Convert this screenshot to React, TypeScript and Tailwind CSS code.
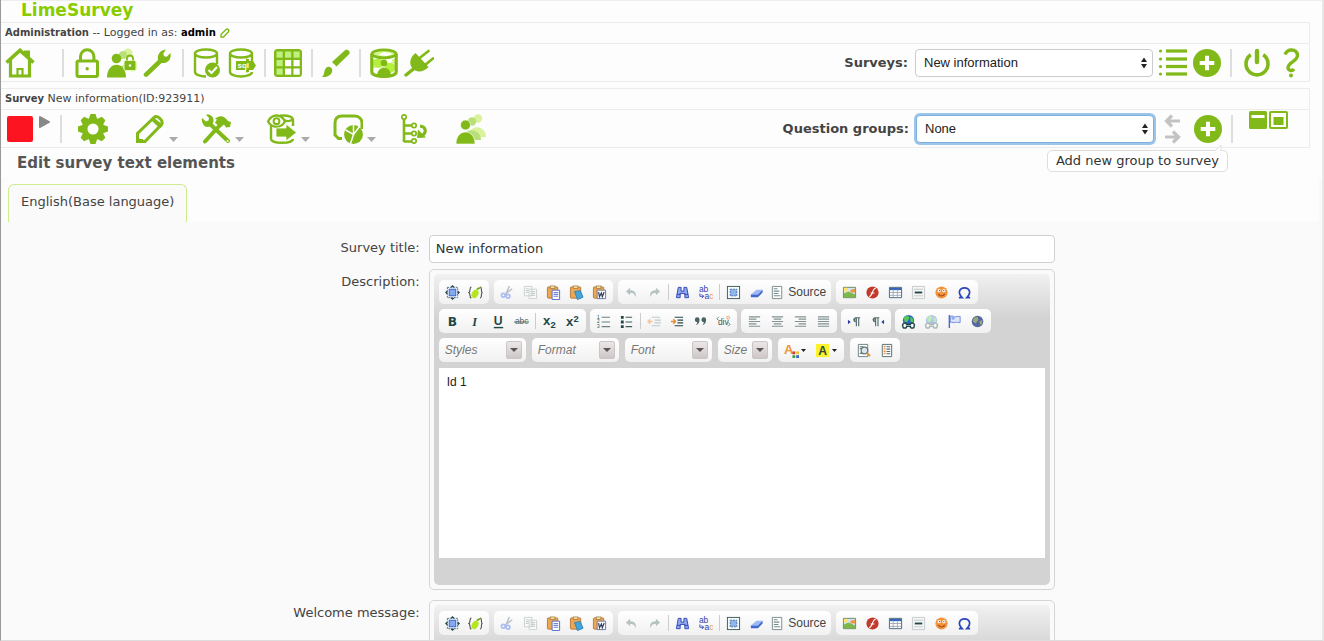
import React from 'react';

type Drawing = { children: React.ReactNode };

const G = '#80b918';
const LIGHT = '#b9e078';
const PALE = '#d9f29b';

/* ---------- icon frames ---------- */

function Big({ children }: Drawing) {
  return (
    <svg viewBox="0 0 30 30" className="block size-[30px]" fill="none" aria-hidden="true">
      {children}
    </svg>
  );
}

function Small({ children }: Drawing) {
  return (
    <svg viewBox="0 0 16 16" className="block size-[15px]" fill="none" aria-hidden="true">
      {children}
    </svg>
  );
}

/* ---------- administration icons ---------- */

const cylinder = (
  <path d="M3 5.500v18.500c0 2.600 5 4.500 11 4.500M25 16V5.500M3 5.500C3 3.300 8 1.500 14 1.500s11 1.800 11 4-5 4-11 4-11-1.800-11-4z" stroke={G} strokeWidth="2.400" />
);

const icons = {
  home: (
    <Big>
      <path d="M1.500 14.500L15 2.300l13.500 12.200" stroke={G} strokeWidth="3.600" />
      <path d="M19 2.500h6v8L19 5z" fill={G} />
      <path d="M5.500 12v16h19V12" stroke={G} strokeWidth="3.200" />
      <path d="M12.500 28.500v-7.500h5v7.500" stroke={G} strokeWidth="2.200" />
    </Big>
  ),
  lock: (
    <Big>
      <rect x="5" y="13" width="20.500" height="15.500" rx="1.500" stroke={G} strokeWidth="3" />
      <path d="M8.500 13V8.500a6.700 6.700 0 0 1 13.400 0V13" stroke={G} strokeWidth="3" />
      <circle cx="15.200" cy="20.800" r="1.700" fill={G} />
    </Big>
  ),
  usersLock: (
    <Big>
      <g fill={PALE}><circle cx="21" cy="5" r="4.500" /><circle cx="25" cy="18" r="5.500" /></g>
      <g fill={LIGHT}><circle cx="16" cy="7" r="4" /><path d="M11 23c0-7 12-8 16 0z" /></g>
      <circle cx="9.500" cy="10.500" r="4.800" fill={G} />
      <path d="M0 29.500c0-17 19-17 19 0z" fill={G} />
      <rect x="17" y="12.500" width="12" height="10" rx="1.500" fill={G} stroke="#e9f8c8" />
      <path d="M20 12.500v-2a3 3 0 0 1 6 0v2" stroke={G} strokeWidth="1.800" />
      <circle cx="23" cy="17.500" r="1.200" fill="#fff" />
    </Big>
  ),
  wrench: (
    <Big>
      <path d="M2 25.500L16 12c-.800-4.500 1-8.500 5.500-10l2.500-.500-2.800 4.200 1 2.600 2.600.500 3.600-3.800c1.300 6-2.500 10.800-8.800 10L5.400 28.500c-1.800 1.300-4.800-1-3.400-3z" fill={G} />
    </Big>
  ),
  dbCheck: (
    <Big>
      {cylinder}
      <circle cx="20.500" cy="22" r="7.500" fill={G} />
      <path d="M16.500 22l3 3 5.500-6" stroke="#fff" strokeWidth="2" />
    </Big>
  ),
  dbSql: (
    <Big>
      {cylinder}
      <path d="M14 28.500c6 0 11-2 11-4.500" stroke={G} strokeWidth="2.400" />
      <path d="M9 13h10v-2.500l3 .500v2h4l3 4.500-3 4.500h-4v2l-3 .500V22H9z" fill={G} />
      <text x="10.500" y="20" fontSize="8" fontWeight="bold" fill="#fff" fontFamily="Liberation Sans">sql</text>
    </Big>
  ),
  grid: (
    <Big>
      <rect x="1" y="1" width="28" height="28" rx="3.500" fill={G} />
      {[3.500, 12, 20.500].map((y, r) =>
        [3.500, 12, 20.500].map((x, c) => (
          <rect key={`${x}-${y}`} x={x} y={y} width="6.200" height="6.200" fill={r === 0 || c === 0 ? '#bdf07c' : '#fff'} />
        )),
      )}
    </Big>
  ),
  brush: (
    <Big>
      <path d="M11 14L24 2.200c2.500-1.600 5.700 1.300 4.300 3.800L15.500 18.500z" fill={G} />
      <path d="M1 29c3-2 1.500-7 4.500-9.500 2.500-2 7 .500 5.500 4.500-1.500 4-6 5.500-10 5z" fill={G} />
    </Big>
  ),
  dbUsers: (
    <Big>
      <path d="M3 6h24v20H3z" fill="#fff" />
      <path d="M4 11h22v9H4z" fill={PALE} />
      <circle cx="9" cy="15" r="4.500" fill="#b5f03c" /><circle cx="21" cy="20" r="5" fill="#b5f03c" />
      <circle cx="20" cy="12" r="3" fill="#fff" />
      <circle cx="15" cy="15" r="3.300" fill={G} />
      <path d="M8 28c0-11 14-11 14 0z" fill={G} />
      <path d="M2.800 5.500v18.500c0 2.600 5 4.500 12.200 4.500s12.200-2 12.200-4.500V5.500" stroke={G} strokeWidth="3.200" />
      <ellipse cx="15" cy="5.800" rx="12" ry="4" fill="#d3f58e" stroke={G} strokeWidth="2.800" />
      <path d="M9 7l6-3 6 1 2 1.500-6 1.500z" fill="#fff" />
    </Big>
  ),
  plug: (
    <Big>
      <path d="M2 27l8-6.500" stroke={G} strokeWidth="3.500" strokeLinecap="round" />
      <path d="M11.500 5L24.500 19c-4.500 5-11.500 6-15.500 2s-4-11 2.500-16z" fill={G} />
      <path d="M15 10.500l9.500-7.500M21 17l8-6.500" stroke={G} strokeWidth="2.600" strokeLinecap="round" />
    </Big>
  ),
  list: (
    <Big>
      {[3, 11, 18.500, 26].map((y) => (
        <g key={y} fill={G}><circle cx="2.500" cy={y} r="1.600" /><rect x="8" y={y - 1.600} width="21" height="3.200" /></g>
      ))}
    </Big>
  ),
  plus: (
    <Big>
      <circle cx="15" cy="15" r="14" fill={G} />
      <path d="M15 7.700v14.600M7.700 15h14.600" stroke="#fff" strokeWidth="4" />
    </Big>
  ),
  power: (
    <Big>
      <path d="M8.800 6.800a11 11 0 1 0 12.400 0" stroke={G} strokeWidth="3.600" />
      <path d="M15 3v11" stroke={G} strokeWidth="4.400" strokeLinecap="round" />
    </Big>
  ),
  help: (
    <Big>
      <path d="M9 6.500C10.500 2.800 13 2 15.500 2c3.700 0 6 2.300 6 5.500 0 5.500-9.500 7-9.500 12 0 2.800 4 4.200 6 1.500" stroke={G} strokeWidth="3.400" />
      <circle cx="15" cy="27.500" r="2" fill={G} />
    </Big>
  ),
  /* ---------- survey icons ---------- */
  gear: (
    <Big>
      {[0, 45, 90, 135].map((a) => (
        <path key={a} d="M12.500 0h5l1.700 5h-8.400zM10.800 25h8.400l-1.700 5h-5z" fill={G} transform={`rotate(${a} 15 15)`} />
      ))}
      <circle cx="15" cy="15" r="8.300" stroke={G} strokeWidth="5.500" />
    </Big>
  ),
  pencil: (
    <Big>
      <path d="M2.500 27.500v-8L19 3.500c3-3 10 3 7.500 7L10 27.500z" stroke={G} strokeWidth="3" />
      <path d="M18 3l10 8-3 3.500-8.500-8zM2 28v-6l3 3h3v3z" fill={G} />
    </Big>
  ),
  tools: (
    <Big>
      <path d="M9 10l18 17" stroke={G} strokeWidth="4" strokeLinecap="round" />
      <path d="M1 4l4 3.500 2.500-1L8 4 5 .800C10-.500 14 4 12 9c-2 5-8 4.500-9 2.500C1 9 .500 6 1 4z" fill={G} />
      <path d="M4 27.500L20 10" stroke={G} strokeWidth="4" strokeLinecap="round" />
      <path d="M14 5c4-4 9-4 13 2l3 1-1 5-4 .500-2-3-4 3-5-5 2-3z" fill={G} />
      <circle cx="26.500" cy="27" r="1" fill="#fff" />
    </Big>
  ),
  preview: (
    <Big>
      <path d="M4 12v13c0 5 22 5 22 0M13 1.800c8-1 13 1 13 4V12M17 6c4 2 7 1 9-1" stroke={G} strokeWidth="2.400" />
      <path d="M1 7.500C5-.500 14-.500 18 7.500c-4 7-13 7-17 0z" fill="#fff" stroke={G} strokeWidth="2.300" />
      <circle cx="9.500" cy="7.200" r="2.900" stroke={G} strokeWidth="2" />
      <path d="M9 14h10v-4l10.500 8.500L19 27v-4H9z" fill={G} stroke="#fff" strokeWidth=".8" />
    </Big>
  ),
  pie: (
    <Big>
      <path d="M9 24.500H5.500L2 21V9c0-5 3-7 7-7h12c5 0 8 3 8 7v6" stroke={G} strokeWidth="3" />
      <circle cx="20.500" cy="20.500" r="9.400" fill={G} />
      <path d="M20.500 11v9.500l-8-4.500M20.500 20.500l-3 9M20.500 20.500l6-8" stroke="#fff" strokeWidth="1.500" />
    </Big>
  ),
  tree: (
    <Big>
      <path d="M5 5v23M5 11.500h8M5 19.500h8M5 27.500h8" stroke={G} strokeWidth="2.600" />
      <g fill="#fff" stroke={G} strokeWidth="1.700"><circle cx="5" cy="3" r="2.200" /><circle cx="15" cy="11.500" r="2.200" /><circle cx="15" cy="19.500" r="2.200" /><circle cx="15" cy="27" r="2.200" /></g>
      <path d="M21 12c7 1 7 8 0 10.500" stroke={G} strokeWidth="3.200" /><path d="M18 24l1-8.500 8 8z" fill={G} />
    </Big>
  ),
  people: (
    <Big>
      <g fill={PALE}><circle cx="22" cy="4.500" r="4.200" /><path d="M13 23c0-14 17-12 17 0z" /></g>
      <g fill={LIGHT}><circle cx="16" cy="7.500" r="4.200" /><path d="M7 26c0-14 18-12 18 0z" /></g>
      <circle cx="9.500" cy="11" r="5" fill={G} stroke="#fff" strokeWidth=".6" />
      <path d="M0 30c0-16 19-16 19 0z" fill={G} stroke="#fff" strokeWidth=".6" />
    </Big>
  ),
  swap: (
    <Big>
      <path d="M21 7H8M13 1.500L7.500 7l5.500 5.500M6 23h13M14 17.500l5.500 5.500-5.500 5.500" stroke="#c3c3c3" strokeWidth="3.200" />
    </Big>
  ),
};

/* ---------- editor icons ---------- */

const INK = '#1f4747';
const paste = (
  <>
    <rect x="1.500" y="2" width="11" height="12" rx="1" fill="#eda652" stroke="#b97a3e" />
    <rect x="4.500" y="1" width="5" height="2.500" fill="#f4e2b0" stroke="#94702d" strokeWidth=".7" />
  </>
);
const textLines = (rows: number[][], color: string) => (
  <path d={rows.map(([x, y, w]) => `M${x} ${y}h${w}`).join('')} stroke={color} strokeWidth="1.200" />
);
const globe = (
  <>
    <circle cx="8" cy="7" r="6" fill="#2d63c8" />
    <path d="M3 4l4-3 2 3-2 4-3 1zM10 3l3 2v4l-3-1z" fill="#55cb54" />
    <path d="M2 13a2 2 0 0 1 4-2h4a2 2 0 0 1 4 2 2 2 0 0 1-4 0H6a2 2 0 0 1-4 0z" fill="#fff" stroke="#244848" strokeWidth="1.500" />
  </>
);

const small = {
  maximize: (
    <Small>
      <path d="M8 0L5.500 2.500h5zM8 16l-2.500-2.500h5zM0 8l2.500-2.500v5zM16 8l-2.500-2.500v5z" fill={INK} />
      <rect x="2.500" y="2.500" width="11" height="11" stroke="#506c80" strokeDasharray="2 1" />
      <rect x="4.500" y="4.500" width="7" height="7" fill="#83a9ef" stroke="#3462d0" />
    </Small>
  ),
  lime: (
    <Small>
      <path d="M3.500 2C1 3 3 7 1 8c2 1 0 5 2.500 6M13 2c2.500 1 .500 5 2 6-1.500 1 .500 5-2 6" stroke="#555" strokeWidth="1.200" />
      <ellipse cx="7.500" cy="9.500" rx="3.300" ry="4.800" fill="#b4e61c" transform="rotate(30 7.500 9.500)" />
      <path d="M9 5c0-2 2-3 5-3-1 2-2 3-5 3z" fill="#6eae16" />
    </Small>
  ),
  cut: (
    <Small>
      <path d="M10 1L6.500 9M13 4L5 10" stroke="#b8bec8" strokeWidth="1.500" />
      <g stroke="#a9bdf0" strokeWidth="1.800"><circle cx="3.500" cy="11" r="2" /><circle cx="8.500" cy="12" r="2" /></g>
    </Small>
  ),
  copy: (
    <Small>
      <path d="M1.500 1.500h8v10h-8zM6.500 4.500h8v10h-8z" fill="#fafafa" stroke="#c9d0d0" />
      {textLines([[3, 4, 3], [3, 6, 3], [3, 8, 3], [8, 7, 5], [8, 9, 5], [8, 11, 5]], '#c9d0d0')}
    </Small>
  ),
  paste: <Small>{paste}<path d="M6.500 5.500h8v10h-8z" fill="#fff" stroke="#5469c4" />{textLines([[8, 8, 5], [8, 10, 5], [8, 12, 5]], '#6f86d8')}</Small>,
  pasteText: <Small>{paste}<path d="M6 7l6-1 3 7-6 2.500z" fill="#45a5d8" stroke="#2d83bb" /></Small>,
  pasteWord: <Small>{paste}<path d="M5.500 5.500h9v9h-9z" fill="#fff" stroke="#6876a8" /><path d="M7 7.500l1 5 2-4 1 4 2-5" stroke="#333f60" strokeWidth="1.300" /></Small>,
  undo: <Small><path d="M6.500 3L2 7l4.500 4V8.500c4 0 5 1.500 5.500 4.500 2-5-1-7.500-5.500-7.500z" fill="#b7c3c3" /></Small>,
  redo: <Small><path d="M9.500 3L14 7l-4.500 4V8.500c-4 0-5 1.500-5.500 4.500-2-5 1-7.500 5.500-7.500z" fill="#b7c3c3" /></Small>,
  find: <Small><path d="M3.500 2.500h3v4h3v-4h3l2 11h-4V9h-5v4.500h-4z" fill="#8fa8ee" stroke="#3146b4" /><path d="M2 10h4M10 10h4" stroke="#3146b4" /></Small>,
  replace: (
    <Small>
      <text x="1" y="7" fontSize="9" fill="#2f44b5" fontFamily="Liberation Sans">ab</text>
      <text x="7" y="15" fontSize="9" fill="#2f44b5" fontFamily="Liberation Sans">a<tspan fill="#ea9442">c</tspan></text>
      <path d="M2 9v3h4M4 10l2 2-2 2" stroke="#2f44b5" />
    </Small>
  ),
  selectAll: <Small><rect x="1.500" y="1.500" width="13" height="13" stroke="#395c5c" /><rect x="4.500" y="4.500" width="7" height="7" fill="#8fb6e8" stroke="#3d70b0" strokeDasharray="2 1" /></Small>,
  erase: <Small><path d="M2 10l6-5h6.500l-5 5z" fill="#9dbaf7" /><path d="M2 10h7.500l5-5v3l-5 5H2z" fill="#4169cf" /></Small>,
  source: <Small><path d="M2.500 1.500h10v13h-10z" fill="#fff" stroke="#758a8a" />{textLines([[4, 4, 4], [4, 6.500, 6], [4, 9, 5], [4, 11.500, 7]], '#758a8a')}</Small>,
  image: <Small><path d="M1.500 2.500h13v11h-13z" fill="#cfe5fb" stroke="#6d8558" /><path d="M2 13V9l5-2 7 3v3z" fill="#7cb84a" /><path d="M9 5l5-1v4H9z" fill="#ef973a" /><path d="M2 3h4v4H2z" fill="#ffe36a" /></Small>,
  flash: <Small><circle cx="8" cy="8" r="6.500" fill="#c13a2b" /><path d="M11.500 3.500c-4 0-3 8-7 9M6 8.500h4" stroke="#fff" strokeWidth="1.200" /></Small>,
  table: <Small><path d="M1.500 2.500h13v11h-13z" fill="#fff" stroke="#4a5f7a" /><path d="M2 3h12v2.500H2z" fill="#3866b5" /><path d="M2 8h12M2 11h12M5.500 5v8M10 5v8" stroke="#9dabb9" /></Small>,
  rule: <Small><path d="M1.500 1.500h13v13h-13z" fill="#f5f5f5" stroke="#c4c9c9" /><path d="M4 8h8" stroke={INK} strokeWidth="2" /><path d="M3 4.500h10M3 11.500h10" stroke="#c4c9c9" /></Small>,
  smiley: <Small><circle cx="8" cy="8" r="6.500" fill="#f4943a" /><g fill="#fff"><circle cx="5.500" cy="6" r="1.700" /><circle cx="10.500" cy="6" r="1.700" /></g><path d="M4.500 9.500c2 3 5 3 7 0" stroke="#a04a1c" strokeWidth="1.200" /><path d="M5.500 6h1M10 6h1" stroke="#222" /></Small>,
  omega: <Small><path d="M2 13.500h3.500C0 8 3 3 8 3s8 5 2.500 10.500H14" stroke="#2c46b9" strokeWidth="1.800" /></Small>,
  bold: <Small><text x="3" y="12.500" fontSize="13" fontWeight="bold" fill={INK} fontFamily="DejaVu Sans">B</text></Small>,
  italic: <Small><text x="4.500" y="12.500" fontSize="13" fontWeight="bold" fontStyle="italic" fill={INK} fontFamily="Liberation Serif">I</text></Small>,
  underline: <Small><text x="3" y="11.500" fontSize="13" fontWeight="bold" fill={INK} fontFamily="Liberation Sans">U</text><path d="M3 14.500h10" stroke={INK} strokeWidth="1.500" /></Small>,
  strike: <Small><text x="1" y="11" fontSize="9" fill="#4e6a6a" fontFamily="Liberation Sans">abc</text><path d="M0 8.500h16" stroke="#4e6a6a" /></Small>,
  sub: <Small><text x="1" y="11.500" fontSize="14" fontWeight="bold" fill={INK} fontFamily="Liberation Sans">x</text><text x="9" y="15" fontSize="10" fontWeight="bold" fill={INK} fontFamily="Liberation Sans">2</text></Small>,
  sup: <Small><text x="1" y="13" fontSize="14" fontWeight="bold" fill={INK} fontFamily="Liberation Sans">x</text><text x="9" y="8" fontSize="10" fontWeight="bold" fill={INK} fontFamily="Liberation Sans">2</text></Small>,
  ol: <Small><g fontSize="5" fill={INK} fontFamily="Liberation Sans"><text x="1" y="5">1</text><text x="1" y="10">2</text><text x="1" y="15">3</text></g>{textLines([[6, 3.500, 9], [6, 8.500, 9], [6, 13.500, 9]], '#6b8282')}</Small>,
  ul: <Small><path d="M2 2h3v3H2zM2 7h3v3H2zM2 12h3v3H2z" fill={INK} />{textLines([[7, 3.500, 7], [7, 8.500, 7], [7, 13.500, 7]], '#3d5c5c')}</Small>,
  outdent: <Small><path d="M6 8H1M3.500 5.500L1 8l2.500 2.500" stroke="#f5c49b" strokeWidth="1.500" />{textLines([[5, 3.500, 9], [8, 6.500, 7], [8, 9.500, 7], [5, 12.500, 9]], '#bcc9c9')}</Small>,
  indent: <Small><path d="M1 8h5M3.500 5.500L6 8l-2.500 2.500" stroke="#e88b35" strokeWidth="1.500" />{textLines([[5, 3.500, 9], [8, 6.500, 6], [8, 9.500, 6], [5, 12.500, 9]], '#254848')}</Small>,
  quote: <Small><path d="M2 6a2.500 2.500 0 1 1 5 0c0 3-1.500 5-4 6 1-1 1.500-2 1.500-3.500C3 8.500 2 7.500 2 6zM9 6a2.500 2.500 0 1 1 5 0c0 3-1.500 5-4 6 1-1 1.500-2 1.500-3.500C10 8.500 9 7.500 9 6z" fill="#496363" /></Small>,
  div: <Small><text x="2" y="12" fontSize="9" fill="#385656" fontFamily="Liberation Sans">div</text><path d="M3 3L1 5l2 2M13 9l2 2-2 2" stroke="#607979" /><circle cx="13" cy="4" r="1.500" stroke="#ed9c56" /></Small>,
  left: <Small>{textLines([[2, 3, 12], [2, 5.500, 8], [2, 8, 12], [2, 10.500, 8], [2, 13, 12]], '#829191')}</Small>,
  center: <Small>{textLines([[2, 3, 12], [4, 5.500, 8], [2, 8, 12], [4, 10.500, 8], [2, 13, 12]], '#829191')}</Small>,
  right: <Small>{textLines([[2, 3, 12], [6, 5.500, 8], [2, 8, 12], [6, 10.500, 8], [2, 13, 12]], '#829191')}</Small>,
  justify: <Small>{textLines([[2, 3, 12], [2, 5.500, 12], [2, 8, 12], [2, 10.500, 12], [2, 13, 12]], '#829191')}</Small>,
  ltr: <Small><path d="M1 6l3 2.500L1 11z" fill="#2c3fa9" /><path d="M9 8.500A2.500 2.500 0 0 1 9 4h5M10 4v9M12.500 4v9" stroke="#536c6c" strokeWidth="1.200" /><path d="M9 4a2.200 2.200 0 0 0 0 4.500z" fill="#536c6c" /></Small>,
  rtl: <Small><path d="M15 6l-3 2.500 3 2.500z" fill="#2c3fa9" /><path d="M5 8.500A2.500 2.500 0 0 1 5 4h5M6 4v9M8.500 4v9" stroke="#536c6c" strokeWidth="1.200" /><path d="M5 4a2.200 2.200 0 0 0 0 4.500z" fill="#536c6c" /></Small>,
  link: <Small>{globe}</Small>,
  unlink: <Small><g opacity=".35">{globe}</g></Small>,
  anchor: <Small><path d="M2.500 1v14" stroke="#4a68cc" strokeWidth="1.500" /><path d="M3.500 2.500c3-1.500 4 1.500 6 .500s3 0 4.500-.500v6.500c-2 1-3-1-5 0s-3-1-5.500 0z" fill="#dce5fa" stroke="#6b86dc" /><path d="M5 3h3v3H5z" fill="#91a8ea" /></Small>,
  world: <Small><circle cx="8" cy="8" r="6.200" fill="#5468a0" /><path d="M4 4l4-1 1 3-3 4-3-2zM10 8l3-2v4l-2 2z" fill="#98a778" /></Small>,
  textColor: <Small><text x="0" y="12" fontSize="14" fontWeight="bold" fill="#ee9637" fontFamily="Liberation Sans">A</text><path d="M9 9h3v3H9z" fill="#d53b31" /><path d="M13 9h3v3h-3z" fill="#e8c532" /><path d="M9 13h3v3H9z" fill="#3fa044" /><path d="M13 13h3v3h-3z" fill="#3c62cd" /></Small>,
  backColor: <Small><path d="M1 1h14v14H1z" fill="#fdf22b" /><text x="3.500" y="12.500" fontSize="13" fontWeight="bold" fill="#32483b" fontFamily="Liberation Sans">A</text></Small>,
  preview: <Small><path d="M2.500 1.500h10v13h-10z" fill="#fff" stroke="#6d8080" />{textLines([[4, 4, 4], [4, 6, 3], [4, 11, 5]], '#607777')}<circle cx="9" cy="8" r="3.500" fill="#dce8f0" stroke="#607777" strokeWidth="1.300" /><path d="M11.500 10.500L15 14" stroke="#e39132" strokeWidth="2" /></Small>,
  template: <Small><path d="M3.500 1.500h10v13h-10z" fill="#fff" stroke="#536c6c" /><path d="M6 3v10" stroke="#ee8d34" strokeWidth="2" strokeDasharray="1.500 1" />{textLines([[8, 4, 4], [8, 6.500, 4], [8, 9, 4], [8, 11.500, 4]], '#536c6c')}</Small>,
};

/* ---------- controls ---------- */

function IconButton({ label, children }: { label: string } & Drawing) {
  return <button type="button" aria-label={label} className="block shrink-0">{children}</button>;
}

function MenuButton({ label, children }: { label: string } & Drawing) {
  return (
    <button type="button" aria-label={label} className="flex shrink-0 items-end gap-1">
      {children}
      <svg viewBox="0 0 9 9" className="block size-[9px]" aria-hidden="true"><path d="M0 2h9L4.500 7z" fill="#aaa" /></svg>
    </button>
  );
}

function Separator() {
  return <span className="mx-2 h-7 w-[2px] shrink-0 bg-[#dedede]" />;
}

function Picker({ id, value, focused = false }: { id: string; value: string; focused?: boolean }) {
  return (
    <span className="relative block w-[238px]">
      <select
        id={id}
        defaultValue={value}
        className={
          'block h-7 w-full appearance-none rounded-[4px] bg-white px-2 font-[Liberation_Sans,sans-serif] text-[13px] text-[#222] outline-none ' +
          (focused ? 'border border-[#7db0e0] ring-2 ring-[#9cc5ea]' : 'border border-[#ccc]')
        }
      >
        <option>{value}</option>
      </select>
      <svg viewBox="0 0 6 12" className="pointer-events-none absolute top-2 right-1.5 h-3 w-1.5" aria-hidden="true">
        <path d="M0 5l3-4.500L6 5zM0 7l3 4.500L6 7z" fill="#222" />
      </svg>
    </span>
  );
}

function ToolGroup({ children }: Drawing) {
  return (
    <div className="flex h-6 shrink-0 items-center rounded-[5px] bg-linear-to-b from-white to-[#f1f1f1] px-[2px]">
      {children}
    </div>
  );
}

function Tools({ names }: { names: (keyof typeof small)[] }) {
  return (
    <>
      {names.map((name) => (
        <button key={name} type="button" aria-label={name} className="flex h-6 w-[23px] items-center justify-center">
          {small[name]}
        </button>
      ))}
    </>
  );
}

function Bar() {
  return <span className="mx-[2px] h-4 w-px bg-[#ccc]" />;
}

function Combo({ label, narrow = false }: { label: string; narrow?: boolean }) {
  return (
    <button
      type="button"
      className={
        'flex h-6 shrink-0 items-center justify-between rounded-[5px] bg-linear-to-b from-white to-[#f1f1f1] pr-1 pl-1.5 font-[Liberation_Sans,sans-serif] text-[12px] text-[#777] italic ' +
        (narrow ? 'w-[54px]' : 'w-[87px]')
      }
    >
      {label}
      <span className="flex h-[18px] w-4 items-center justify-center rounded-[2px] border border-[#ccc5c5] bg-linear-to-b from-[#ece7e7] to-[#cfc7c7]">
        <svg viewBox="0 0 8 4" className="h-1 w-2" aria-hidden="true"><path d="M0 0h8L4 4z" fill="#5d5555" /></svg>
      </span>
    </button>
  );
}

function ColorTool({ label, children }: { label: string } & Drawing) {
  return (
    <button type="button" aria-label={label} className="flex h-6 w-[31px] items-center justify-center gap-[2px]">
      {children}
      <svg viewBox="0 0 5 3" className="h-[3px] w-[5px]" aria-hidden="true"><path d="M0 0h5L2.500 3z" fill="#222" /></svg>
    </button>
  );
}

function FormattingRows() {
  return (
    <>
      <div className="flex gap-1">
        <ToolGroup>
          <Tools names={['bold', 'italic', 'underline', 'strike']} />
          <Bar />
          <Tools names={['sub', 'sup']} />
        </ToolGroup>
        <ToolGroup>
          <Tools names={['ol', 'ul']} />
          <Bar />
          <Tools names={['outdent', 'indent', 'quote', 'div']} />
        </ToolGroup>
        <ToolGroup><Tools names={['left', 'center', 'right', 'justify']} /></ToolGroup>
        <ToolGroup><Tools names={['ltr', 'rtl']} /></ToolGroup>
        <ToolGroup><Tools names={['link', 'unlink', 'anchor', 'world']} /></ToolGroup>
      </div>
      <div className="flex gap-1.5">
        <Combo label="Styles" />
        <Combo label="Format" />
        <Combo label="Font" />
        <Combo label="Size" narrow />
        <ToolGroup>
          <ColorTool label="Text color">{small.textColor}</ColorTool>
          <ColorTool label="Background color">{small.backColor}</ColorTool>
        </ToolGroup>
        <ToolGroup><Tools names={['preview', 'template']} /></ToolGroup>
      </div>
    </>
  );
}

function Editor({ id, value, formatting = false }: { id: string; value: string; formatting?: boolean }) {
  return (
    <div className="rounded-[5px] border border-[#d5d5d5] p-1">
      <div className="rounded-[5px] bg-[#d3d3d3] bg-linear-to-b from-[#f1f1f1] to-[#d3d3d3] to-[44px] px-[5px] pt-[6px] pb-[27px]">
        <div className="flex flex-col gap-[5px] pb-[6px]">
          <div className="flex gap-[5px]">
            <ToolGroup><Tools names={['maximize', 'lime']} /></ToolGroup>
            <ToolGroup><Tools names={['cut', 'copy', 'paste', 'pasteText', 'pasteWord']} /></ToolGroup>
            <ToolGroup>
              <Tools names={['undo', 'redo']} />
              <Bar />
              <Tools names={['find', 'replace']} />
              <Bar />
              <Tools names={['selectAll', 'erase']} />
              <button type="button" className="flex h-6 w-[61px] items-center justify-center gap-[3px] font-[Liberation_Sans,sans-serif] text-[12px] text-[#444]">
                {small.source}
                Source
              </button>
            </ToolGroup>
            <ToolGroup><Tools names={['image', 'flash', 'table', 'rule', 'smiley', 'omega']} /></ToolGroup>
          </div>
          {formatting && <FormattingRows />}
        </div>
        <textarea
          id={id}
          defaultValue={value}
          className="block h-[190px] w-full resize-none bg-white p-2 font-[Liberation_Sans,sans-serif] text-[12px] leading-3 text-[#222] outline-none"
        />
      </div>
    </div>
  );
}

function Field({ id, label, children }: { id: string; label: string } & Drawing) {
  return (
    <div className="flex gap-[5px]">
      <label htmlFor={id} className="w-[32%] shrink-0 pt-[5px] pr-1 text-right text-[13px] leading-4">{label}</label>
      <div className="w-[47.4%] min-w-[590px]">{children}</div>
    </div>
  );
}

export default function App() {
  return (
    <div className="flex h-screen flex-col overflow-hidden border-r-2 border-b border-l border-r-[#e8e8e8] border-b-[#ddd] border-l-[#999] bg-[#fdfdfd] font-[DejaVu_Sans,Verdana,sans-serif] text-[#444]">
      <h1 className="h-[22px] shrink-0 border-t border-[#eee] pl-5 text-[17px] leading-[18px] font-bold text-[#8c0]">LimeSurvey</h1>

      <header className="mr-3 shrink-0 border-y border-r border-[#ececec]">
        <div className="flex h-[21px] items-center gap-1 border-b border-[#ececec] pl-1 text-[11px]">
          <p><strong className="text-[10px]">Administration</strong> -- Logged in as: <strong className="text-[10px] text-black">admin</strong></p>
          <a href="#profile" aria-label="Edit profile">
            <svg viewBox="0 0 10 10" className="block size-[10px]" fill="none" aria-hidden="true">
              <path d="M1 9V6.500L6 1.500c1.500-1.200 3.500.800 2.500 2.200L3.500 9z" stroke={G} strokeWidth="1.400" />
            </svg>
          </a>
        </div>
        <div className="flex h-[37px] items-center justify-between pl-1">
          <nav className="flex items-center gap-[5px]">
            <IconButton label="Home">{icons.home}</IconButton>
            <span className="-mr-[5px] ml-3.5 flex items-center"><Separator /></span>
            <IconButton label="Security">{icons.lock}</IconButton>
            <IconButton label="User groups">{icons.usersLock}</IconButton>
            <IconButton label="Settings">{icons.wrench}</IconButton>
            <span className="-mr-[5px] -ml-[3px] flex items-center"><Separator /></span>
            <IconButton label="Check data">{icons.dbCheck}</IconButton>
            <IconButton label="Export SQL">{icons.dbSql}</IconButton>
            <span className="-mx-[6px] flex items-center"><Separator /></span>
            <IconButton label="Label sets">{icons.grid}</IconButton>
            <span className="-mx-[5px] flex items-center"><Separator /></span>
            <IconButton label="Templates">{icons.brush}</IconButton>
            <span className="-mx-[5px] flex items-center"><Separator /></span>
            <IconButton label="Participants">{icons.dbUsers}</IconButton>
            <IconButton label="Plugins">{icons.plug}</IconButton>
          </nav>
          <div className="flex items-center">
            <label htmlFor="surveys" className="pr-[7px] text-[13px] font-bold">Surveys:</label>
            <Picker id="surveys" value="New information" />
            <div className="flex items-center gap-1 pl-[5px]">
              <IconButton label="Survey list">{icons.list}</IconButton>
              <IconButton label="New survey">{icons.plus}</IconButton>
            </div>
            <Separator />
            <div className="flex items-center gap-1 pr-[3px] pl-[2px]">
              <IconButton label="Log out">{icons.power}</IconButton>
              <IconButton label="Help">{icons.help}</IconButton>
            </div>
          </div>
        </div>
      </header>

      <section className="mt-[6px] mr-3 shrink-0 border-y border-r border-[#ececec]">
        <p className="h-[21px] border-b border-[#ececec] pl-1 text-[11px] leading-5"><strong className="text-[10px]">Survey</strong> New information(ID:923911)</p>
        <div className="flex h-[37px] items-center justify-between pl-1.5">
          <nav className="flex items-center">
            <button type="button" aria-label="Survey inactive" className="size-[26px] rounded-[2px] bg-[#fc1520]" />
            <svg viewBox="0 0 11 26" className="mr-[2px] ml-[6px] block h-[26px] w-[11px]" aria-hidden="true"><path d="M1 1l9 5-9 5z" fill="#888" stroke="#888" strokeWidth="2" strokeLinejoin="round" /></svg>
            <Separator />
            <div className="flex items-center gap-[23px] pl-2">
              <span className="pr-1"><IconButton label="Survey properties">{icons.gear}</IconButton></span>
              <MenuButton label="Edit">{icons.pencil}</MenuButton>
              <MenuButton label="Tools">{icons.tools}</MenuButton>
              <MenuButton label="Preview">{icons.preview}</MenuButton>
              <MenuButton label="Responses">{icons.pie}</MenuButton>
              <IconButton label="Survey logic">{icons.tree}</IconButton>
              <span className="pl-1"><IconButton label="Participants">{icons.people}</IconButton></span>
            </div>
          </nav>
          <div className="flex items-center self-stretch">
            <label htmlFor="groups" className="pr-[7px] text-[13px] font-bold">Question groups:</label>
            <Picker id="groups" value="None" focused />
            <div className="flex items-center gap-1 pl-[5px]">
              <IconButton label="Previous or next group">{icons.swap}</IconButton>
              <div className="relative">
                <IconButton label="Add group">{icons.plus}</IconButton>
                <div role="tooltip" className="absolute top-[36px] -right-[5px] z-10 rounded-[5px] border border-[#ddd] bg-white px-2 py-[2px] text-[13px] leading-4 whitespace-nowrap text-[#333]">
                  Add new group to survey
                  <svg viewBox="0 0 8 6" className="absolute -top-[6px] right-1 h-[6px] w-2" aria-hidden="true"><path d="M0 6l6-6v6" fill="#fff" stroke="#ddd" /></svg>
                </div>
              </div>
            </div>
            <Separator />
            <button type="button" aria-label="Toggle panels" className="self-start pr-[21px] pl-2">
              <svg viewBox="0 0 39 20" className="block h-5 w-[39px]" fill="none" aria-hidden="true">
                <rect x="0" y="1" width="18" height="18" rx="1.500" fill={G} />
                <rect x="2.500" y="5" width="13" height="3" fill="#fff" />
                <rect x="21" y="2" width="17" height="16" rx="1" fill="#fff" stroke={G} strokeWidth="2" />
                <rect x="24.500" y="7" width="10" height="8" fill={G} />
              </svg>
            </button>
          </div>
        </div>
      </section>

      <h2 className="h-[31px] shrink-0 pl-4 text-[15px] leading-[30px] font-bold text-[#555]">Edit survey text elements</h2>

      <main className="min-h-0 flex-1 bg-[#fafafa]">
        <div className="mx-[3px] rounded-t-[5px] rounded-br-[5px] bg-[#fdfdfd] px-1 pt-[5px]">
          <button type="button" className="h-[38px] rounded-t-[6px] border-x border-t border-[#cdec8e] bg-[#fafafa] px-3 pb-1 text-[13px]">
            English(Base language)
          </button>
        </div>
        <form className="flex flex-col pt-[13px]">
          <Field id="title" label="Survey title:">
            <input id="title" defaultValue="New information" className="block h-7 w-full rounded-[4px] border border-[#d0d0d0] bg-white px-1.5 pb-px text-[13px] text-[#333] outline-none" />
          </Field>
          <div className="mt-1.5">
            <Field id="description" label="Description:"><Editor id="description" value="Id 1" formatting /></Field>
          </div>
          <div className="mt-2.5">
            <Field id="welcome" label="Welcome message:"><Editor id="welcome" value="" /></Field>
          </div>
        </form>
      </main>
    </div>
  );
}
